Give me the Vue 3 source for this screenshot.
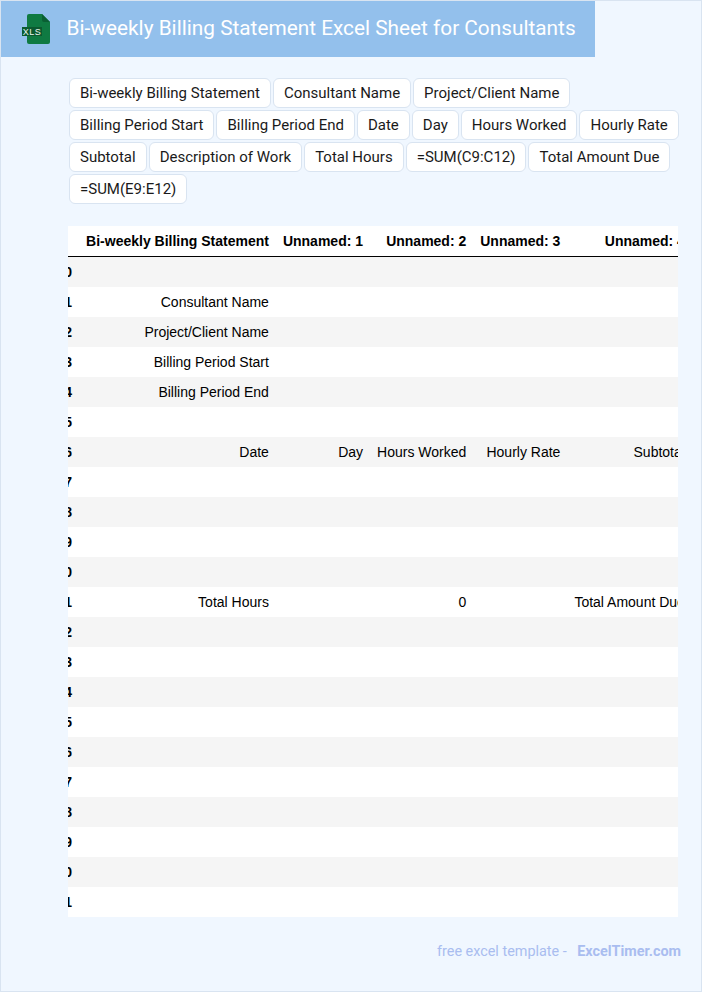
<script setup>
const chips = ['Bi-weekly Billing Statement','Consultant Name','Project/Client Name','Billing Period Start','Billing Period End','Date','Day','Hours Worked','Hourly Rate','Subtotal','Description of Work','Total Hours','=SUM(C9:C12)','Total Amount Due','=SUM(E9:E12)']
const heads = ['Bi-weekly Billing Statement','Unnamed: 1','Unnamed: 2','Unnamed: 3','Unnamed: 4']
const filled = {
  1:['Consultant Name','','','',''],
  2:['Project/Client Name','','','',''],
  3:['Billing Period Start','','','',''],
  4:['Billing Period End','','','',''],
  6:['Date','Day','Hours Worked','Hourly Rate','Subtotal'],
  11:['Total Hours','','0','','Total Amount Due'],
}
const rows = Array.from({length:22},(_,i)=>({i,cells:filled[i]||['','','','','']}))
</script>

<template>
  <div class="page">
    <header class="head">
      <svg class="logo" width="32" height="32" viewBox="0 0 32 32">
        <path d="M7 3a2 2 0 0 1 2-2h13l8 8v20a2 2 0 0 1-2 2H9a2 2 0 0 1-2-2z" fill="#0f7a42"/>
        <path d="M22 1v6a2 2 0 0 0 2 2h6z" fill="#0a5f33"/>
        <rect x="2" y="14" width="20" height="9" fill="#0b5a30"/>
        <text x="12" y="21.700" class="xls">XLS</text>
      </svg>
      <h1 class="title">Bi-weekly Billing Statement Excel Sheet for Consultants</h1>
    </header>
    <div class="chips">
      <span v-for="c in chips" :key="c" class="chip">{{ c }}</span>
    </div>
    <div class="clip">
      <table class="sheet">
        <thead>
          <tr><th></th><th v-for="h in heads" :key="h">{{ h }}</th></tr>
        </thead>
        <tbody>
          <tr v-for="r in rows" :key="r.i">
            <th>{{ r.i }}</th>
            <td v-for="(c,n) in r.cells" :key="n">{{ c }}</td>
          </tr>
        </tbody>
      </table>
    </div>
    <footer class="foot">
      <span class="free">free excel template - </span><b class="brand">ExcelTimer.com</b>
    </footer>
  </div>
</template>

<style>
html,body{margin:0;padding:0}
</style>
<style scoped>
.page{width:702px;height:992px;box-sizing:border-box;border:1px solid #d9e4f1;background:#f0f7ff;font-family:Roboto,sans-serif;overflow:hidden}
.head{width:594px;height:56px;background:#93c0ec;display:flex;align-items:center;box-sizing:border-box;padding-left:19px}
.logo{flex:none}
.xls{font:400 9px "Liberation Sans",sans-serif;fill:#eef7f0;text-anchor:middle;letter-spacing:.5px}
.title{margin:0 0 2px 14.600px;font-size:20.800px;font-weight:400;color:#fff;white-space:nowrap}
.chips{margin:20px 0 0 67px;width:612px;display:flex;flex-wrap:wrap}
.chip{margin:1px;height:30px;box-sizing:border-box;padding:0 10px;border:1px solid #d9e4f1;border-radius:6px;background:#fff;font-size:15px;line-height:28px;color:#1a1a1a;white-space:nowrap}
.clip{margin:21px 0 0 67px;width:610px;overflow:hidden}
.sheet{margin-left:-18.500px;border-collapse:separate;border-spacing:0;font:14px "Liberation Sans",Arial,sans-serif;color:#000;background:#fff}
.sheet th,.sheet td{padding:0 7px;height:30px;text-align:right;white-space:nowrap;box-sizing:border-box}
.sheet thead th{height:31px;border-bottom:1px solid #000;font-weight:700}
.sheet tbody th{font-weight:700}
.sheet tbody tr:nth-child(odd){background:#f5f5f5}
.foot{margin:25px 0 0;height:20px;line-height:20px;padding-left:436px;font-size:14.400px;color:#a9bdf0;white-space:pre}
.free{margin-right:7px}
.brand{font-weight:700}
</style>
